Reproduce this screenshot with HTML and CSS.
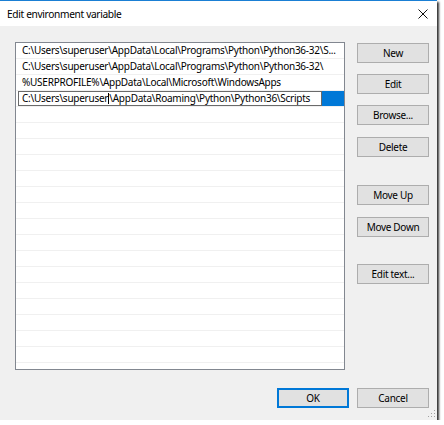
FILE: index.html
```html
<!DOCTYPE html>
<html>
<head>
<meta charset="utf-8">
<link rel="stylesheet" href="styles.css">
</head>
<body>
<div class="window">
  <div class="titlebar">
    <span class="title">Edit environment variable</span>
    <svg class="close" width="10" height="10" viewBox="0 0 10 10"><path d="M0.5 0.5 L9.5 9.5 M9.5 0.5 L0.5 9.5" stroke="#111" stroke-width="1" fill="none"/></svg>
  </div>
  <div class="body">
    <div class="main">
      <div class="list">
        <div class="row">C:\Users\superuser\AppData\Local\Programs\Python\Python36-32\S...</div>
        <div class="row">C:\Users\superuser\AppData\Local\Programs\Python\Python36-32\</div>
        <div class="row">%USERPROFILE%\AppData\Local\Microsoft\WindowsApps</div>
        <div class="row row-edit">
          <div class="editbox"><span>C:\Users\superuser</span><span class="caret"></span><span>\AppData\Roaming\Python\Python36\Scripts</span></div>
          <div class="sel"></div>
        </div>
      </div>
      <div class="buttons">
        <div class="btn b-new">New</div>
        <div class="btn b-edit">Edit</div>
        <div class="btn b-browse">Browse...</div>
        <div class="btn b-delete">Delete</div>
        <div class="btn b-up">Move Up</div>
        <div class="btn b-down">Move Down</div>
        <div class="btn b-text">Edit text...</div>
      </div>
    </div>
    <div class="footer">
      <div class="btn btn-default">OK</div>
      <div class="btn">Cancel</div>
    </div>
    <svg class="grip" width="8" height="8" viewBox="0 0 8 8">
      <rect x="6" y="0" width="1" height="1" fill="#a0a0a0"/>
      <rect x="3" y="3" width="1" height="1" fill="#a0a0a0"/>
      <rect x="6" y="3" width="1" height="1" fill="#a0a0a0"/>
      <rect x="0" y="6" width="1" height="1" fill="#a0a0a0"/>
      <rect x="3" y="6" width="1" height="1" fill="#a0a0a0"/>
      <rect x="6" y="6" width="1" height="1" fill="#a0a0a0"/>
    </svg>
  </div>
</div>
</body>
</html>
```

FILE: styles.css
```css
html, body {
  margin: 0;
  padding: 0;
  background: #ffffff;
}
body {
  font-family: "Noto Sans", "Open Sans", sans-serif;
  color: #000;
}
.window {
  width: 437px;
  height: 420px;
  box-sizing: border-box;
  border-top: 1px solid #1a7fd4;
  background: #f0f0f0;
  box-shadow: 2px 2px 2px rgba(0,0,0,0.8);
  display: flex;
  flex-direction: column;
}
.titlebar {
  height: 25px;
  background: #ffffff;
  display: flex;
  align-items: center;
  justify-content: space-between;
  padding: 0 5px 0 7px;
}
.title {
  font-size: 10.2px;
  letter-spacing: -0.35px;
  line-height: 14px;
}
.close {
  display: block;
  margin-right: 4px;
  margin-top: 1px;
}
.body {
  flex: 1;
  position: relative;
  padding: 16px 8px 0 15px;
}
.main {
  display: flex;
  gap: 12px;
}
.list {
  width: 330px;
  height: 328px;
  box-sizing: border-box;
  border: 1px solid #828790;
  background: repeating-linear-gradient(to bottom, #ffffff 0, #ffffff 15px, #f0f0f0 15px, #f0f0f0 16px);
}
.row {
  height: 16px;
  line-height: 15px;
  font-size: 10px;
  letter-spacing: -0.25px;
  padding-left: 6px;
  white-space: nowrap;
  overflow: hidden;
}
.row-edit {
  display: flex;
  padding-left: 2px;
}
.editbox {
  width: 304px;
  height: 15px;
  box-sizing: border-box;
  border: 1px solid #6a6a6a;
  background: #fff;
  padding-left: 3px;
  line-height: 13px;
  display: flex;
  align-items: center;
  overflow: hidden;
}
.caret {
  display: inline-block;
  flex: none;
  width: 1px;
  height: 11px;
  background: #000;
}
.sel {
  flex: 1;
  height: 15px;
  background: #0078d7;
}
.buttons {
  display: flex;
  flex-direction: column;
  width: 72px;
}
.btn {
  width: 72px;
  height: 20px;
  box-sizing: border-box;
  border: 1px solid #adadad;
  background: #e1e1e1;
  font-size: 10px;
  letter-spacing: -0.3px;
  display: flex;
  align-items: center;
  justify-content: center;
}
.b-new { margin-top: 1px; }
.b-edit { margin-top: 11px; }
.b-browse { margin-top: 11px; }
.b-delete { margin-top: 12px; }
.b-up { margin-top: 28px; }
.b-down { margin-top: 12px; }
.b-text { margin-top: 27px; }
.footer {
  display: flex;
  justify-content: flex-end;
  gap: 8px;
  margin-top: 18px;
}
.btn-default {
  border: 2px solid #0078d7;
}
.grip {
  position: absolute;
  right: 1px;
  bottom: 2px;
}
```
